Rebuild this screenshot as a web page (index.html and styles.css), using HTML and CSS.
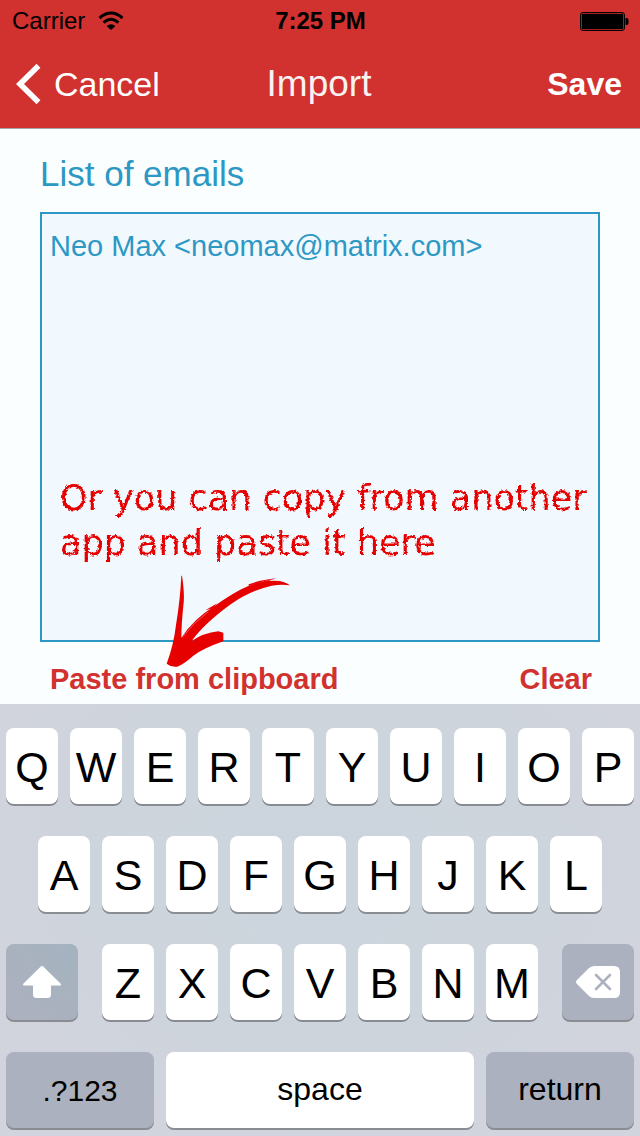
FILE: index.html
```html
<!DOCTYPE html>
<html lang="en">
<head>
<meta charset="utf-8">
<meta name="viewport" content="width=device-width, initial-scale=1">
<title>Import</title>
<link rel="stylesheet" href="styles.css">
</head>
<body>
<header class="top">
  <div class="status">
    <span class="carrier">Carrier
      <svg class="wifi" viewBox="0 0 26 20" aria-hidden="true"><g fill="none" stroke="#000" stroke-width="3"><path d="M1.500 7Q13-3 24.500 7"/><path d="M5.600 11.600Q13 4.800 20.400 11.600"/></g><path d="M8.600 15Q13 11.400 17.400 15L13 19Z"/></svg>
    </span>
    <span class="clock">7:25 PM</span>
    <svg class="battery" viewBox="0 0 50 20" role="img" aria-label="Battery full"><rect x="1.500" y="1.500" width="44" height="18" rx="2.500" fill="none" stroke="#000" stroke-width="1"/><rect x="2.700" y="2.700" width="41.600" height="15.600" rx="1.200"/><path d="M46.500 7h1q2 0 2 2v3q0 2-2 2h-1z"/></svg>
  </div>
  <nav class="bar">
    <button class="nav-button back" type="button"><svg class="chevron" viewBox="0 0 25 40" aria-hidden="true"><path d="M22.500 1.800L4 20L22.500 38.200" fill="none" stroke="#fff" stroke-width="5.600"/></svg>Cancel</button>
    <h1 class="title">Import</h1>
    <button class="nav-button save" type="button">Save</button>
  </nav>
</header>
<main class="content">
  <label class="label" for="emails">List of emails</label>
  <div class="editor">
    <textarea class="emails" id="emails" spellcheck="false">Neo Max &lt;neomax@matrix.com&gt;</textarea>
    <p class="note">Or you can copy from another<br>app and paste it here</p>
    <svg class="arrow" viewBox="0 0 540 330" aria-hidden="true"><g fill="#e60000"><path d="M126 32Q135 90 130 122Q124 180 124 218Q160 162 225 122Q300 68 350 54L408 40L385 48Q430 43 450 61Q425 57 395 62Q330 77 270 119Q190 178 155 228Q190 204 235 199L250 203V229Q190 250 160 272Q135 295 112 305Q95 308 80 296Q101 240 108 180Q121 100 124 32Z"/><path d="M196 136L232 115L218 130ZM326 58Q360 45 409 40Q370 48 326 63Z"/></g><path d="M127 217Q160 173 205 140" fill="none" stroke="#f8a9aa" stroke-width="1.500"/></svg>
  </div>
  <div class="actions">
    <button class="action" type="button">Paste from clipboard</button>
    <button class="action" type="button">Clear</button>
  </div>
</main>
<section class="keyboard" aria-label="Keyboard">
  <div class="row">
    <button class="key">Q</button><button class="key">W</button><button class="key">E</button><button class="key">R</button><button class="key">T</button><button class="key">Y</button><button class="key">U</button><button class="key">I</button><button class="key">O</button><button class="key">P</button>
  </div>
  <div class="row inset">
    <button class="key">A</button><button class="key">S</button><button class="key">D</button><button class="key">F</button><button class="key">G</button><button class="key">H</button><button class="key">J</button><button class="key">K</button><button class="key">L</button>
  </div>
  <div class="row split">
    <button class="key dark shift" aria-label="Shift"><svg class="shift-icon" viewBox="0 0 38 32" aria-hidden="true"><path d="M17.800.6Q19-.4 20.200.6L37.500 17.500Q39 19.500 36.500 19.500H28V28.500Q28 32 24.500 32H13.500Q10 32 10 28.500V19.500H1.500Q-1 19.500.5 17.500Z" fill="#fff"/></svg></button>
    <div class="letters">
      <button class="key">Z</button><button class="key">X</button><button class="key">C</button><button class="key">V</button><button class="key">B</button><button class="key">N</button><button class="key">M</button>
    </div>
    <button class="key dark delete" aria-label="Delete"><svg class="delete-icon" viewBox="0 0 44 32" aria-hidden="true"><path d="M18 0H38Q44 0 44 6V26Q44 32 38 32H18Q15 32 12.500 29.500L1 18Q-1 16 1 14L12.500 2.500Q15 0 18 0Z" fill="#fff"/><path d="M20 9L34 23M34 9L20 23" stroke="#abb1be" stroke-width="2.600" stroke-linecap="round"/></svg></button>
  </div>
  <div class="row bottom">
    <button class="key dark word numbers">.?123</button><button class="key word">space</button><button class="key dark word">return</button>
  </div>
</section>
<svg class="defs" aria-hidden="true"><filter id="chalk"><feTurbulence type="fractalNoise" baseFrequency="0.35" numOctaves="2" seed="4"/><feDisplacementMap in="SourceGraphic" scale="4" xChannelSelector="R" yChannelSelector="G"/></filter></svg>
</body>
</html>
```
FILE: styles.css
```css
* { box-sizing: border-box; }
body {
  margin: 0;
  min-height: 100vh;
  display: flex;
  flex-direction: column;
  background: #fbfeff;
  font-family: "Liberation Sans", Arial, sans-serif;
}
button {
  border: 0;
  padding: 0;
  background: none;
  font: inherit;
  color: inherit;
}
.top {
  background: #d1312f;
  border-bottom: 1px solid #a5a5a5;
}
.status {
  display: grid;
  grid-template-columns: 1fr auto 1fr;
  align-items: center;
  height: 40px;
  padding: 1px 11px 0 12px;
  font-size: 24px;
}
.carrier { display: flex; align-items: center; gap: 13px; }
.wifi { width: 26px; height: 20px; }
.clock { font-weight: 700; }
.battery { width: 50px; height: 20px; justify-self: end; }
.bar {
  display: grid;
  grid-template-columns: 1fr auto 1fr;
  align-items: center;
  height: 88px;
  padding: 0 18px 0 16px;
  color: #fff;
}
.nav-button { display: flex; align-items: center; font-size: 34px; }
.back { gap: 13px; }
.chevron { width: 25px; height: 40px; }
.save { justify-self: end; font-size: 32px; font-weight: 700; }
.title { margin: 0; font-size: 37px; font-weight: 400; color: #f8f2f2; }
.content {
  flex: 1;
  display: flex;
  flex-direction: column;
  padding: 23px 40px 0;
}
.label { font-size: 35px; line-height: 44px; color: #2c98c3; }
.editor {
  position: relative;
  flex: 1;
  display: flex;
  min-height: 430px;
  margin-top: 16px;
}
.emails {
  flex: 1;
  width: 100%;
  padding: 16px 8px;
  border: 2px solid #2c98c3;
  border-radius: 0;
  outline: 0;
  resize: none;
  background: #f1f9ff;
  color: #2c98c3;
  font-family: inherit;
  font-size: 29px;
  line-height: 32px;
}
.note {
  position: absolute;
  left: 20px;
  top: 264px;
  margin: 0;
  color: #e60000;
  font-family: "DejaVu Sans", sans-serif;
  font-size: 35px;
  line-height: 45px;
  white-space: nowrap;
  pointer-events: none;
  filter: url(#chalk);
}
.arrow {
  position: absolute;
  left: 100px;
  top: 353px;
  width: 180px;
  height: 110px;
  pointer-events: none;
}
.actions {
  display: flex;
  justify-content: space-between;
  align-items: center;
  height: 62px;
  padding: 12px 8px 0 10px;
}
.action { color: #d1312f; font-size: 29px; font-weight: 700; }
.keyboard {
  display: flex;
  flex-direction: column;
  gap: 32px;
  padding: 24px 6px 8px;
  background: radial-gradient(ellipse at 50% 35%, #cbd5de 0%, #ced4dc 50%, #d1d4dc 75%);
}
.row { display: flex; gap: 12px; }
.inset { padding: 0 32px; }
.split { gap: 24px; }
.letters { flex: 1; display: flex; gap: 12px; }
.key {
  flex: 1 1 0;
  min-width: 0;
  height: 76px;
  display: flex;
  align-items: center;
  justify-content: center;
  padding-top: 2px;
  border-radius: 8px;
  background: #fff;
  box-shadow: 0 2px 0 #898c90;
  color: #000;
  font-size: 43px;
}
.dark { background-color: #abb1be; }
.shift, .delete { flex: 0 0 72px; padding: 0; }
.shift { background-image: radial-gradient(circle at 100% 0, #a4b3c0, #abb1be 75%); }
.shift-icon { width: 38px; height: 32px; }
.delete-icon { width: 44px; height: 32px; }
.bottom { display: grid; grid-template-columns: 148fr 308fr 148fr; }
.word { font-size: 32px; padding: 0 0 2px; }
.numbers { font-size: 30px; padding: 2px 0 0; }
.defs { position: absolute; width: 0; height: 0; }
```
